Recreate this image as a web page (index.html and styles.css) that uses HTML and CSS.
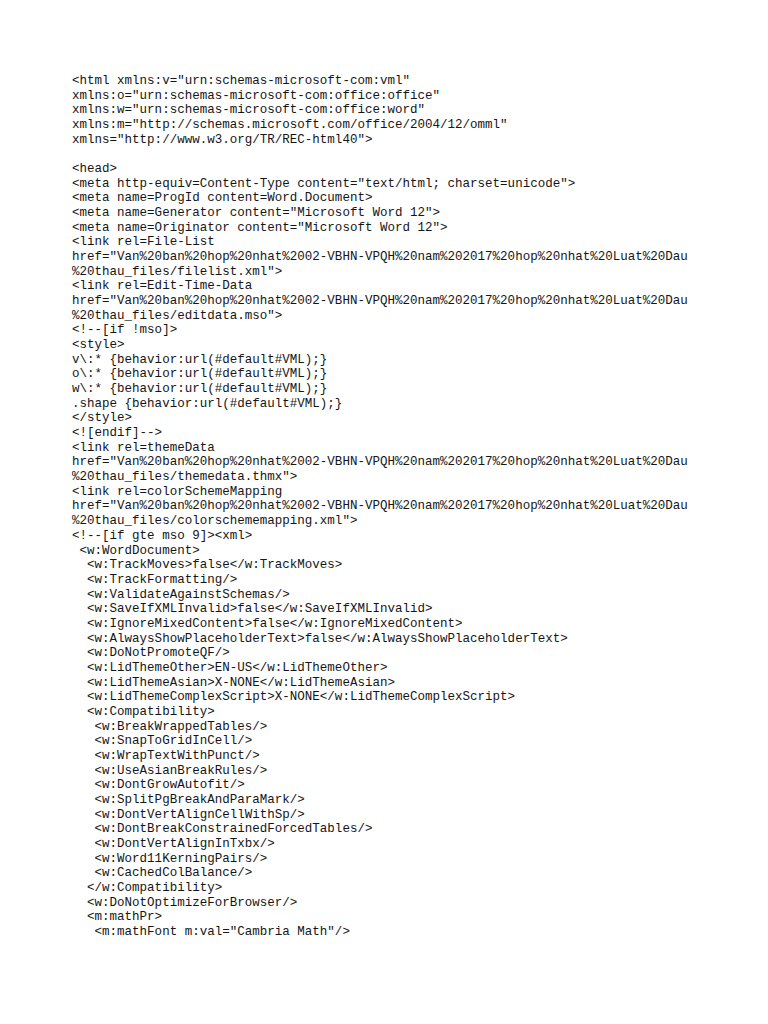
FILE: index.html
```html
<!DOCTYPE html>
<html>
<head>
<meta charset="utf-8">
<link rel="stylesheet" href="styles.css">
</head>
<body>
<pre class="source">&lt;html xmlns:v="urn:schemas-microsoft-com:vml"
xmlns:o="urn:schemas-microsoft-com:office:office"
xmlns:w="urn:schemas-microsoft-com:office:word"
xmlns:m="http://schemas.microsoft.com/office/2004/12/omml"
xmlns="http://www.w3.org/TR/REC-html40"&gt;

&lt;head&gt;
&lt;meta http-equiv=Content-Type content="text/html; charset=unicode"&gt;
&lt;meta name=ProgId content=Word.Document&gt;
&lt;meta name=Generator content="Microsoft Word 12"&gt;
&lt;meta name=Originator content="Microsoft Word 12"&gt;
&lt;link rel=File-List
href="Van%20ban%20hop%20nhat%2002-VBHN-VPQH%20nam%202017%20hop%20nhat%20Luat%20Dau
%20thau_files/filelist.xml"&gt;
&lt;link rel=Edit-Time-Data
href="Van%20ban%20hop%20nhat%2002-VBHN-VPQH%20nam%202017%20hop%20nhat%20Luat%20Dau
%20thau_files/editdata.mso"&gt;
&lt;!--[if !mso]&gt;
&lt;style&gt;
v\:* {behavior:url(#default#VML);}
o\:* {behavior:url(#default#VML);}
w\:* {behavior:url(#default#VML);}
.shape {behavior:url(#default#VML);}
&lt;/style&gt;
&lt;![endif]--&gt;
&lt;link rel=themeData
href="Van%20ban%20hop%20nhat%2002-VBHN-VPQH%20nam%202017%20hop%20nhat%20Luat%20Dau
%20thau_files/themedata.thmx"&gt;
&lt;link rel=colorSchemeMapping
href="Van%20ban%20hop%20nhat%2002-VBHN-VPQH%20nam%202017%20hop%20nhat%20Luat%20Dau
%20thau_files/colorschememapping.xml"&gt;
&lt;!--[if gte mso 9]&gt;&lt;xml&gt;
 &lt;w:WordDocument&gt;
  &lt;w:TrackMoves&gt;false&lt;/w:TrackMoves&gt;
  &lt;w:TrackFormatting/&gt;
  &lt;w:ValidateAgainstSchemas/&gt;
  &lt;w:SaveIfXMLInvalid&gt;false&lt;/w:SaveIfXMLInvalid&gt;
  &lt;w:IgnoreMixedContent&gt;false&lt;/w:IgnoreMixedContent&gt;
  &lt;w:AlwaysShowPlaceholderText&gt;false&lt;/w:AlwaysShowPlaceholderText&gt;
  &lt;w:DoNotPromoteQF/&gt;
  &lt;w:LidThemeOther&gt;EN-US&lt;/w:LidThemeOther&gt;
  &lt;w:LidThemeAsian&gt;X-NONE&lt;/w:LidThemeAsian&gt;
  &lt;w:LidThemeComplexScript&gt;X-NONE&lt;/w:LidThemeComplexScript&gt;
  &lt;w:Compatibility&gt;
   &lt;w:BreakWrappedTables/&gt;
   &lt;w:SnapToGridInCell/&gt;
   &lt;w:WrapTextWithPunct/&gt;
   &lt;w:UseAsianBreakRules/&gt;
   &lt;w:DontGrowAutofit/&gt;
   &lt;w:SplitPgBreakAndParaMark/&gt;
   &lt;w:DontVertAlignCellWithSp/&gt;
   &lt;w:DontBreakConstrainedForcedTables/&gt;
   &lt;w:DontVertAlignInTxbx/&gt;
   &lt;w:Word11KerningPairs/&gt;
   &lt;w:CachedColBalance/&gt;
  &lt;/w:Compatibility&gt;
  &lt;w:DoNotOptimizeForBrowser/&gt;
  &lt;m:mathPr&gt;
   &lt;m:mathFont m:val="Cambria Math"/&gt;</pre>
</body>
</html>
```

FILE: styles.css
```css
html, body {
  margin: 0;
  padding: 0;
  background: #ffffff;
}

.source {
  margin: 0;
  padding: 74px 0 0 72px;
  font-family: "Liberation Mono", "DejaVu Sans Mono", monospace;
  font-size: 12.53px;
  line-height: 14.67px;
  color: #151515;
  white-space: pre;
}
```
